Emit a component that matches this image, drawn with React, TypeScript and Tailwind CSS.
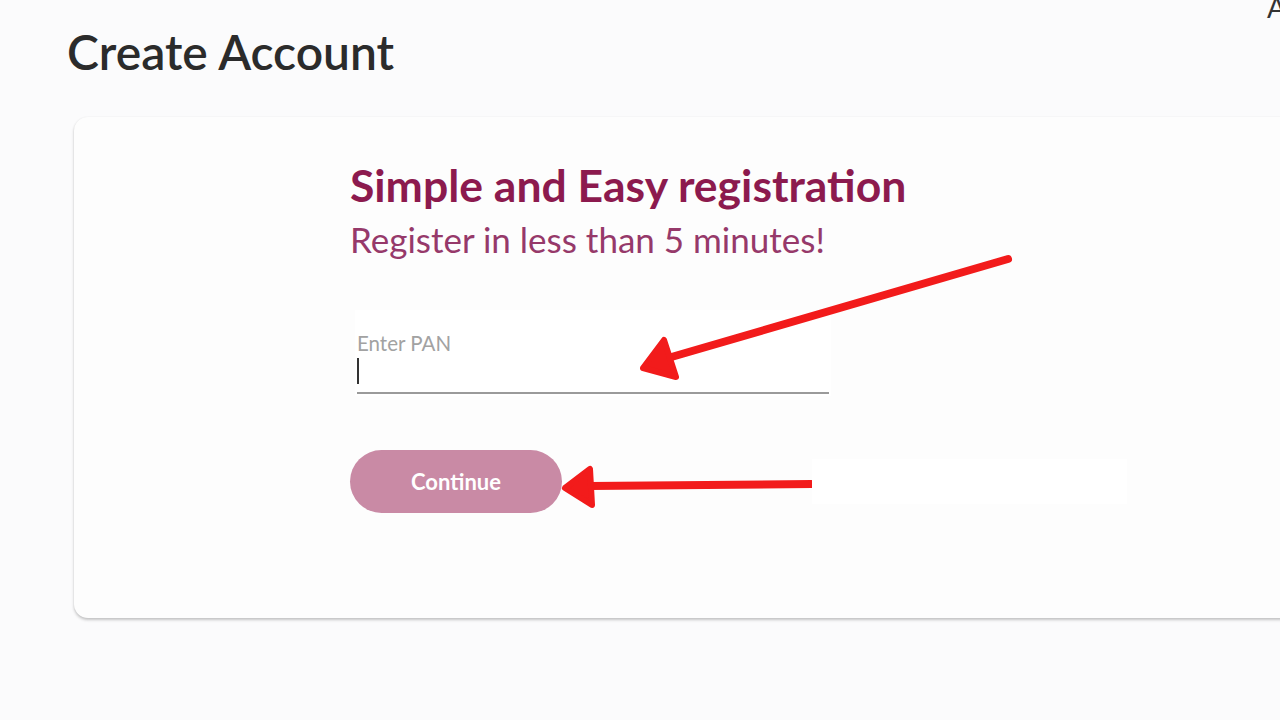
import React from "react";

export default function App() {
  return (
    <div
      className="relative w-[1280px] h-[720px] overflow-hidden bg-[#fbfbfc]"
      style={{ fontFamily: "Lato, 'Open Sans', sans-serif" }}
    >
      <div className="absolute right-[-6px] top-[-14px] text-[28px] text-[#333]">A</div>
      <div className="pl-[67px] pt-[22px]">
        <h1 className="text-[48px] leading-[60px] font-semibold text-[#2b2b2b]">Create Account</h1>
      </div>
      <div className="ml-[74px] mt-[35px] w-[1240px] h-[501px] rounded-[14px] bg-[#fdfdfd] shadow-[0_2px_3px_rgba(0,0,0,0.22),0_0_2px_rgba(0,0,0,0.06)] pl-[276px] pt-[40px]">
        <h2 className="text-[44.5px] leading-[56px] font-bold text-[#8c1a4e]">Simple and Easy registration</h2>
        <p className="text-[35px] leading-[44px] text-[#96396a] mt-[4px]">Register in less than 5 minutes!</p>
        <div className="mt-[49px] ml-[5px] w-[476px] h-[86px] bg-white pt-[20px] px-[2px]">
          <div className="text-[20.5px] leading-[26px] text-[#a2a2a2]">Enter PAN</div>
          <div className="h-[38px] border-b-2 border-[#9a9a9a] flex items-start pt-[2px]">
            <div className="w-[1.5px] h-[26px] bg-[#333]" />
          </div>
        </div>
        <div className="mt-[54px] flex items-center">
          <button className="w-[212px] h-[63px] rounded-full bg-[#c98aa5] text-white text-[22px] font-bold">
            Continue
          </button>
          <div className="ml-[250px] w-[315px] h-[45px] bg-white" />
        </div>
      </div>
      <svg className="absolute inset-0 pointer-events-none" width="1280" height="720">
        <line x1="1008" y1="259" x2="668" y2="358" stroke="#f21b1b" strokeWidth="8" strokeLinecap="round" />
        <path d="M643 368 L664 340 L676 377 Z" fill="#f21b1b" stroke="#f21b1b" strokeWidth="6" strokeLinejoin="round" />
        <line x1="812" y1="484" x2="590" y2="486" stroke="#f21b1b" strokeWidth="8" />
        <path d="M565 488 L590 469 L592 505 Z" fill="#f21b1b" stroke="#f21b1b" strokeWidth="6" strokeLinejoin="round" />
      </svg>
    </div>
  );
}
